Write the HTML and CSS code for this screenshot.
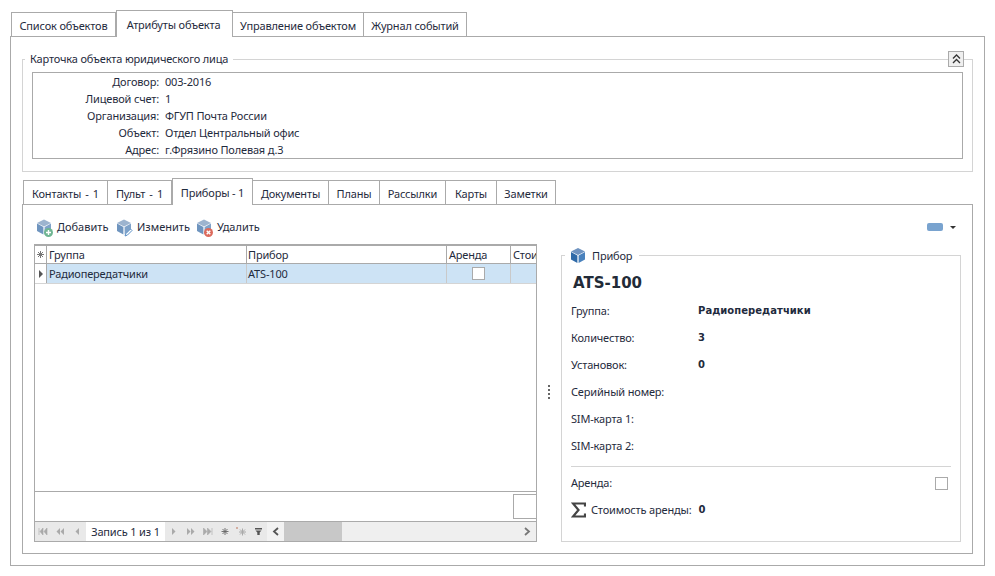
FILE: index.html
```html
<!DOCTYPE html>
<html lang="ru">
<head>
<meta charset="utf-8">
<title>Атрибуты объекта</title>
<link rel="stylesheet" href="styles.css">
</head>
<body>
<svg class="defs" width="0" height="0" aria-hidden="true">
  <symbol id="cube" viewBox="0 0 16 16">
    <path d="M8 0.5 15 4 8 7.5 1 4z" fill="#6f93c0"/>
    <path d="M1 4.600 7.400 8v7.400L1 12z" fill="#2f6aa8"/>
    <path d="M15 4.600 8.600 8v7.400L15 12z" fill="#4a82bd"/>
  </symbol>
  <symbol id="cubegrey" viewBox="0 0 16 16">
    <path d="M8 0.5 15 4 8 7.5 1 4z" fill="#9db4cf"/>
    <path d="M1 4.600 7.400 8v7.400L1 12z" fill="#6f95bf"/>
    <path d="M15 4.600 8.600 8v7.400L15 12z" fill="#7fa2c9"/>
  </symbol>
</svg>
<main class="window">
  <nav class="tabs tabs-main">
    <span class="tab">Список объектов</span>
    <span class="tab tab-active">Атрибуты объекта</span>
    <span class="tab tab-u">Управление объектом</span>
    <span class="tab tab-j">Журнал событий</span>
  </nav>
  <section class="pane-main">
    <div class="card">
      <span class="legend">Карточка объекта юридического лица</span>
      <button class="collapse" aria-label="Свернуть">
        <svg width="9" height="10" viewBox="0 0 9 10"><path d="M1 4.500 4.500 1 8 4.500M1 9 4.500 5.500 8 9" fill="none" stroke="#333" stroke-width="1.300"/></svg>
      </button>
      <dl class="info">
        <dt>Договор:</dt><dd>003-2016</dd>
        <dt>Лицевой счет:</dt><dd>1</dd>
        <dt>Организация:</dt><dd>ФГУП Почта России</dd>
        <dt>Объект:</dt><dd>Отдел Центральный офис</dd>
        <dt>Адрес:</dt><dd>г.Фрязино Полевая д.3</dd>
      </dl>
    </div>
    <nav class="tabs tabs-inner">
      <span class="tab t-a t-count">Контакты - 1</span>
      <span class="tab t-b t-count">Пульт - 1</span>
      <span class="tab tab-active t-c">Приборы - 1</span>
      <span class="tab t-d">Документы</span>
      <span class="tab t-e">Планы</span>
      <span class="tab t-f">Рассылки</span>
      <span class="tab t-g">Карты</span>
      <span class="tab t-h">Заметки</span>
    </nav>
    <section class="pane-inner">
      <div class="toolbar">
        <span class="tool tool-add">
          <span class="ico">
            <svg width="16" height="16"><use href="#cubegrey"/></svg>
            <svg class="badge" width="9" height="9" viewBox="0 0 9 9"><circle cx="4.500" cy="4.500" r="4.500" fill="#6fb592"/><path d="M4.500 2v5M2 4.500h5" stroke="#fff" stroke-width="1.400"/></svg>
          </span>Добавить</span>
        <span class="tool tool-edit">
          <span class="ico">
            <svg width="16" height="16"><use href="#cubegrey"/></svg>
            <svg class="badge" width="9" height="9" viewBox="0 0 9 9"><path d="M1 8 2 5.500 6.500 1 8 2.500 3.500 7z" fill="#fff" stroke="#5a8fc6"/></svg>
          </span>Изменить</span>
        <span class="tool tool-del">
          <span class="ico">
            <svg width="16" height="16"><use href="#cubegrey"/></svg>
            <svg class="badge" width="9" height="9" viewBox="0 0 9 9"><circle cx="4.500" cy="4.500" r="4.500" fill="#dc6a5c"/><path d="M2.700 2.700l3.600 3.600M6.300 2.700 2.700 6.300" stroke="#fff" stroke-width="1.400"/></svg>
          </span>Удалить</span>
        <span class="pill"></span>
        <span class="caret"></span>
      </div>
      <div class="workspace">
        <div class="grid">
          <div class="row row-head">
            <span class="cell c-ind star">
              <svg width="7" height="7" viewBox="0 0 7 7"><path d="M3.500 0v7M0 3.500h7M1 1l5 5M6 1 1 6" stroke="#777" stroke-width="1"/></svg>
            </span>
            <span class="cell c-group">Группа</span>
            <span class="cell c-dev">Прибор</span>
            <span class="cell c-rent">Аренда</span>
            <span class="cell c-cost">Стоимость</span>
          </div>
          <div class="row row-data">
            <span class="cell c-ind ind-cur"><i class="tri"></i></span>
            <span class="cell c-group">Радиопередатчики</span>
            <span class="cell c-dev">ATS-100</span>
            <span class="cell c-rent center"><i class="check"></i></span>
            <span class="cell c-cost"></span>
          </div>
          <div class="grid-body"></div>
          <div class="grid-foot"><span class="foot-box"></span></div>
          <div class="navbar">
            <span class="navs">
              <svg class="nb" width="17" height="9" viewBox="0 0 17 9"><path d="M4 1v7M5 4.500 8 1v7zM9 4.500 12 1v7z" fill="#aaa" stroke="#aaa" stroke-width=".6"/></svg>
              <svg class="nb" width="17" height="9" viewBox="0 0 17 9"><path d="M4.500 4.500 8 1v7zM8.500 4.500 12 1v7z" fill="#aaa"/></svg>
              <svg class="nb" width="17" height="9" viewBox="0 0 17 9"><path d="M6.500 4.500 10 1v7z" fill="#aaa"/></svg>
            </span>
            <span class="rec">Запись 1 из 1</span>
            <span class="navs">
              <svg class="nb" width="17" height="9" viewBox="0 0 17 9"><path d="M10.500 4.500 7 1v7z" fill="#aaa"/></svg>
              <svg class="nb" width="17" height="9" viewBox="0 0 17 9"><path d="M8.500 4.500 5 1v7zM12.500 4.500 9 1v7z" fill="#aaa"/></svg>
              <svg class="nb" width="17" height="9" viewBox="0 0 17 9"><path d="M8 4.500 4.500 1v7zM12 4.500 8.500 1v7zM13 1v7" fill="#aaa" stroke="#aaa" stroke-width=".6"/></svg>
              <svg class="nb" width="17" height="9" viewBox="0 0 17 9"><path d="M9 1v7M5.500 4.500h7M6.500 2l5 5M11.500 2l-5 5" stroke="#666" stroke-width=".9"/></svg>
              <svg class="nb" width="17" height="9" viewBox="0 0 17 9"><path d="M9.500 1.500v7M6 5h7M7 2.500l5 5M12 2.500l-5 5" stroke="#aaa" stroke-width="1"/><path d="M4 0v2M3 1h2" stroke="#c98" stroke-width="1"/></svg>
              <svg class="nb" width="17" height="9" viewBox="0 0 17 9"><path d="M5 1h7v1.500H5zM5.500 3.500h6L9.700 5.500V8H7.300V5.500z" fill="#555"/></svg>
            </span>
            <span class="scroll-btn"><svg width="7" height="9" viewBox="0 0 7 9"><path d="M6 1 2 4.500 6 8" fill="none" stroke="#555" stroke-width="1.800"/></svg></span>
            <span class="thumb"></span>
            <span class="track"><svg width="7" height="9" viewBox="0 0 7 9"><path d="M1 1l4 3.500L1 8" fill="none" stroke="#777" stroke-width="1.800"/></svg></span>
          </div>
        </div>
        <div class="splitter"><i></i><i></i><i></i><i></i></div>
        <aside class="detail">
          <span class="legend legend-d"><svg width="16" height="17" viewBox="0 0 16 16"><use href="#cube"/></svg>Прибор</span>
          <h2 class="d-title">ATS-100</h2>
          <div class="d-row"><span class="d-l">Группа:</span><b class="d-v">Радиопередатчики</b></div>
          <div class="d-row"><span class="d-l">Количество:</span><b class="d-v">3</b></div>
          <div class="d-row"><span class="d-l">Установок:</span><b class="d-v">0</b></div>
          <div class="d-row"><span class="d-l">Серийный номер:</span></div>
          <div class="d-row"><span class="d-l">SIM-карта 1:</span></div>
          <div class="d-row"><span class="d-l">SIM-карта 2:</span></div>
          <hr class="d-sep">
          <div class="d-rent"><span>Аренда:</span><i class="check"></i></div>
          <div class="d-sum">
            <svg width="15" height="16" viewBox="0 0 15 16"><path d="M14 4.500V1.500H2L7.500 8 2 14.500h12V11.500" fill="none" stroke="#444" stroke-width="2.200"/></svg>
            <span class="sum-l">Стоимость аренды:</span><b class="sum-v">0</b>
          </div>
        </aside>
      </div>
    </section>
  </section>
</main>
</body>
</html>
```

FILE: styles.css
```css
* { box-sizing: border-box; }
html, body { margin: 0; height: 100%; background: #fff; }
body {
  font-family: "Noto Sans", "Liberation Sans", sans-serif;
  font-size: 11px;
  line-height: 14px;
  letter-spacing: -0.17px;
  color: #1f2b3d;
  overflow: hidden;
}
.defs { position: absolute; }
.window { padding: 10px 0 0 10px; width: 985px; }

.tabs { display: flex; align-items: flex-end; }
.tabs-main { height: 26px; padding-left: 1px; }
.tabs-inner { height: 26px; margin-top: 6px; padding-left: 1px; }
.tab {
  height: 24px;
  border: 1px solid #aaa;
  border-bottom: 0;
  border-left-width: 0;
  padding: 6px 0 0;
  text-align: center;
  background: #fff;
  white-space: nowrap;
}
.tab:first-child { border-left-width: 1px; }
.tab-active {
  border-left-width: 1px;
  margin-bottom: -1px;
  height: 27px;
  padding: 7px 0 0;
  position: relative;
  z-index: 1;
}
.t-count { word-spacing: 1.500px; }
.tabs-main .tab { width: 105px; }
.tabs-main .tab-active { width: 117px; padding-right: 2px; }
.tabs-main .tab-u { width: 131px; }
.tabs-main .tab-j { width: 103px; }
.t-a { width: 85px; }
.t-b { width: 64px; }
.t-c { width: 81px; }
.t-d { width: 76px; }
.t-e { width: 51px; }
.t-f { width: 66px; }
.t-g { width: 51px; }
.t-h { width: 59px; }

.pane-main {
  height: 530px;
  border: 1px solid #aaa;
  padding: 22px 11px 11px;
}
.card {
  position: relative;
  height: 113px;
  border: 1px solid #d4d4d4;
  padding: 12px 9px 0;
}
.legend {
  position: absolute;
  top: -8px;
  left: 2px;
  background: #fff;
  padding: 0 5px;
  white-space: nowrap;
}
.collapse {
  position: absolute;
  top: -9px;
  right: 8px;
  width: 16px;
  height: 16px;
  padding: 0;
  border: 1px solid #aaa;
  background: #efefef;
  display: flex;
  align-items: center;
  justify-content: center;
}
.info {
  margin: 0;
  height: 87px;
  border: 1px solid #aaa;
  padding: 0;
  display: grid;
  grid-template-columns: 126px 1fr;
  grid-auto-rows: 17px;
  column-gap: 6px;
  align-items: center;
}
.info dt { text-align: right; }
.info dd { margin: 0; }

.pane-inner {
  height: 350px;
  border: 1px solid #aaa;
  padding: 0 11px;
}
.toolbar {
  height: 39px;
  display: flex;
  align-items: center;
  padding: 5px 0 0 2px;
  position: relative;
  letter-spacing: 0;
}
.tool { display: flex; align-items: center; }
.ico { position: relative; width: 16px; height: 17px; margin-right: 5px; display: block; }
.ico > svg:first-child { display: block; }
.badge { position: absolute; right: -1px; bottom: -1px; }
.tool-add { width: 80px; }
.tool-edit { width: 80px; }
.pill {
  width: 16px;
  height: 8px;
  border-radius: 2px;
  background: #79a3cf;
  margin-left: auto;
  margin-right: 7px;
}
.caret {
  width: 0;
  height: 0;
  border: 3px solid transparent;
  border-top-color: #333;
  border-bottom-width: 0;
  margin-right: 5px;
}

.workspace { display: flex; height: 298px; align-items: stretch; }
.grid {
  width: 503px;
  border: 1px solid #aaa;
  border-top-width: 2px;
  display: flex;
  flex-direction: column;
  overflow: hidden;
}
.row { display: flex; flex: none; }
.row-head { height: 18px; border-bottom: 1px solid #aaa; }
.row-data { height: 20px; background: #cde3f5; border-bottom: 1px solid #d4d4d4; }
.cell {
  padding: 2px 2px 0;
  border-right: 1px solid #c9c9c9;
  white-space: nowrap;
  overflow: hidden;
  display: block;
}
.row-data .cell { padding-top: 3px; }
.row-head .cell { border-right-color: #aaa; }
.row .c-ind { width: 12px; padding: 0; display: flex; align-items: center; justify-content: center; }
.ind-cur { background: #fff; border-right-color: #aaa; }
.tri {
  width: 0; height: 0;
  border-left: 4px solid #555;
  border-top: 4px solid transparent;
  border-bottom: 4px solid transparent;
}
.c-group { width: 200px; }
.c-dev { width: 200px; padding-left: 1px; }
.c-rent { width: 64px; }
.c-cost { flex: 1; border-right: 0; }
.row .center { display: flex; align-items: center; justify-content: center; padding: 0; }
.check {
  display: block;
  width: 13px;
  height: 13px;
  border: 1px solid #aaa;
  background: #fff;
}
.grid-body { flex: 1; }
.grid-foot {
  height: 30px;
  border-top: 1px solid #aaa;
  padding-top: 2px;
  flex: none;
  display: flex;
  justify-content: flex-end;
}
.foot-box { width: 23px; height: 25px; border: 1px solid #aaa; border-right: 0; }
.navbar {
  height: 20px;
  flex: none;
  border-top: 1px solid #aaa;
  display: flex;
  background: #e9e9e9;
}
.navs { display: flex; align-items: center; }
.nb { display: block; }
.rec {
  width: 79px;
  background: #fff;
  padding-top: 3px;
  text-align: center;
  white-space: nowrap;
}
.scroll-btn {
  width: 17px;
  background: #f2f2f2;
  display: flex;
  align-items: center;
  justify-content: center;
}
.thumb { width: 58px; background: #c8c8c8; }
.track {
  flex: 1;
  background: #efefef;
  display: flex;
  align-items: center;
  justify-content: flex-end;
  padding-right: 5px;
}

.splitter {
  width: 24px;
  display: flex;
  flex-direction: column;
  align-items: center;
  justify-content: center;
  gap: 2px;
  padding-bottom: 2px;
}
.splitter i { width: 2px; height: 2px; background: #666; display: block; }

.detail {
  position: relative;
  width: 400px;
  margin-top: 11px;
  border: 1px solid #d4d4d4;
  padding: 17px 9px 0 9px;
}
.legend-d {
  left: 3px;
  top: -9px;
  display: flex;
  align-items: center;
  padding: 0 7px 0 5px;
}
.legend-d svg { margin-right: 6px; }
.d-title {
  margin: 0 0 0 2px;
  height: 23px;
  font: bold 15px/20px "DejaVu Sans", sans-serif;
  letter-spacing: 0;
  color: #222b38;
}
.d-row { height: 27px; display: flex; padding-top: 8px; }
.d-l { width: 127px; }
.d-v { font-family: "DejaVu Sans", sans-serif; font-size: 10px; letter-spacing: 0.05px; }
.d-sep { margin: 8px 0 0; height: 1px; border: 0; background: #d4d4d4; }
.d-rent {
  display: flex;
  justify-content: space-between;
  align-items: center;
  padding: 9px 3px 0 0;
}
.d-sum { display: flex; align-items: center; margin-top: 12px; }
.sum-l { margin-left: 5px; }
.sum-v { margin-left: 7px; font-family: "DejaVu Sans", sans-serif; font-size: 10px; }
```
